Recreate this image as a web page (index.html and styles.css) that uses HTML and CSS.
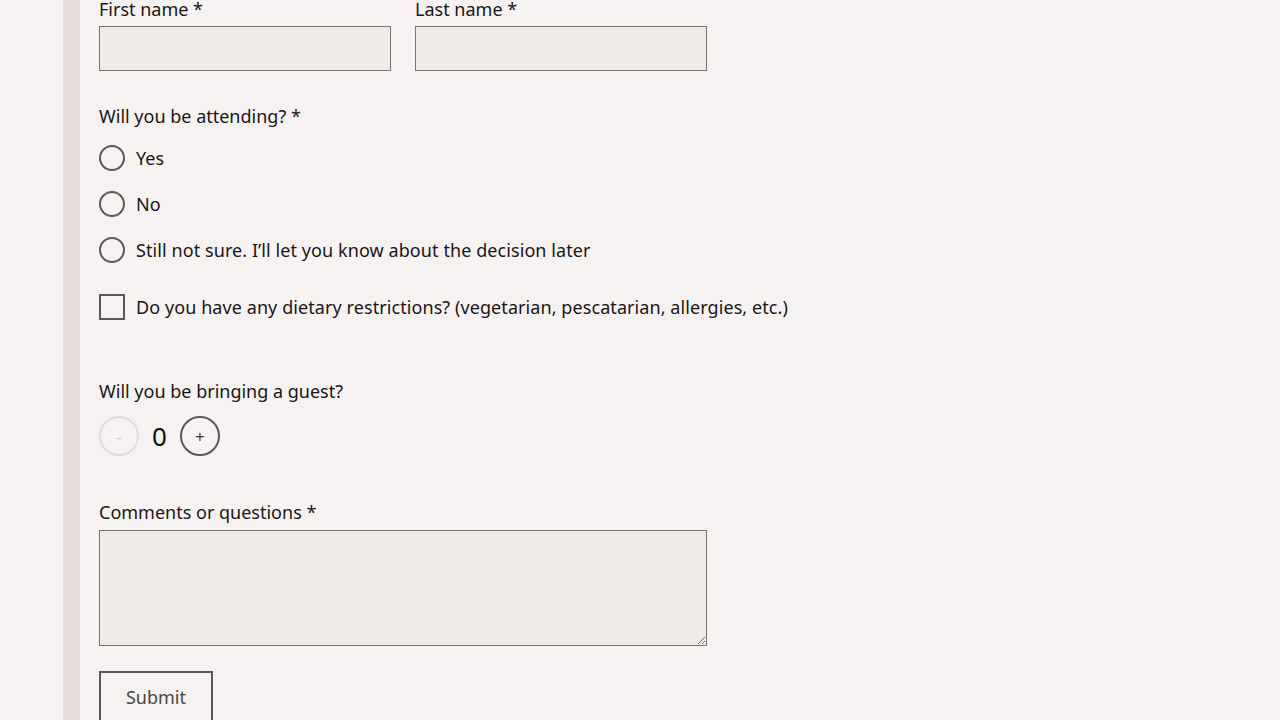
FILE: index.html
```html
<!DOCTYPE html>
<html lang="en">
<head>
<meta charset="utf-8">
<title>RSVP</title>
<link rel="stylesheet" href="styles.css">
</head>
<body>
<div class="page">
  <form class="form">
    <div class="row">
      <div class="field">
        <label class="label">First name *</label>
        <input class="input" type="text">
      </div>
      <div class="field">
        <label class="label">Last name *</label>
        <input class="input" type="text">
      </div>
    </div>

    <div class="group">
      <div class="label">Will you be attending? *</div>
      <label class="option"><span class="radio"></span><span>Yes</span></label>
      <label class="option"><span class="radio"></span><span>No</span></label>
      <label class="option"><span class="radio"></span><span>Still not sure. I’ll let you know about the decision later</span></label>
    </div>

    <label class="option check-option"><span class="checkbox"></span><span>Do you have any dietary restrictions? (vegetarian, pescatarian, allergies, etc.)</span></label>

    <div class="guest">
      <div class="label">Will you be bringing a guest?</div>
      <div class="stepper">
        <span class="step disabled">-</span>
        <span class="count">0</span>
        <span class="step">+</span>
      </div>
    </div>

    <div class="comments">
      <label class="label">Comments or questions *</label>
      <textarea class="textarea"></textarea>
    </div>

    <button class="submit" type="button">Submit</button>
  </form>
</div>
</body>
</html>
```
FILE: styles.css
```css
html, body {
  margin: 0;
  padding: 0;
  background: #f6f2f1;
  height: 100%;
  overflow: hidden;
}
body {
  font-family: "Noto Sans", "Open Sans", sans-serif;
  font-size: 18px;
  letter-spacing: 0.08px;
  color: #1a1616;
}
.page {
  margin-left: 63px;
  border-left: 17px solid #e3dcdb;
  padding-left: 19px;
  min-height: 100%;
}
.form {
  margin-top: -4px;
  display: flex;
  flex-direction: column;
  width: 608px;
}
.label {
  display: block;
  line-height: 26px;
  margin-bottom: 6px;
  white-space: nowrap;
  letter-spacing: 0;
}
.row .label {
  margin-bottom: 4px;
}
.row {
  display: flex;
  gap: 24px;
}
.field {
  width: 292px;
}
.input {
  display: block;
  box-sizing: border-box;
  width: 292px;
  height: 45px;
  margin: 0;
  background: #efebe9;
  border: 1.5px solid #7a7472;
  border-radius: 0;
}
.group {
  margin-top: 32px;
  display: flex;
  flex-direction: column;
}
.group .label {
  margin-bottom: 6px;
}
.option {
  display: flex;
  align-items: center;
  gap: 11px;
  height: 46px;
  white-space: nowrap;
}
.radio {
  box-sizing: border-box;
  width: 26px;
  height: 26px;
  border: 2px solid #5f5755;
  border-radius: 50%;
  flex: none;
}
.check-option {
  margin-top: 11px;
}
.checkbox {
  box-sizing: border-box;
  width: 26px;
  height: 26px;
  border: 2px solid #5f5755;
  flex: none;
}
.guest {
  margin-top: 48px;
}
.guest .label {
  margin-bottom: 12px;
}
.stepper {
  display: flex;
  align-items: center;
  gap: 13px;
  height: 40px;
}
.step {
  box-sizing: border-box;
  width: 40px;
  height: 40px;
  border: 2px solid #5f5755;
  border-radius: 50%;
  display: flex;
  align-items: center;
  justify-content: center;
  font-size: 17px;
  color: #3d3634;
}
.step.disabled {
  border-color: #e2dcda;
  color: #d3cccb;
}
.count {
  font-size: 26px;
  color: #111;
}
.comments {
  margin-top: 43px;
}
.comments .label {
  margin-bottom: 5px;
}
.textarea {
  display: block;
  box-sizing: border-box;
  width: 608px;
  height: 116px;
  margin: 0;
  background: #efebe9;
  border: 1.5px solid #7a7472;
  border-radius: 0;
  resize: vertical;
}
.submit {
  margin-top: 25px;
  align-self: flex-start;
  box-sizing: border-box;
  width: 114px;
  height: 56px;
  background: transparent;
  border: 2px solid #5f5755;
  border-radius: 0;
  font-family: inherit;
  font-size: 18px;
  color: #4c4543;
  padding: 0 0 4px;
}
```
